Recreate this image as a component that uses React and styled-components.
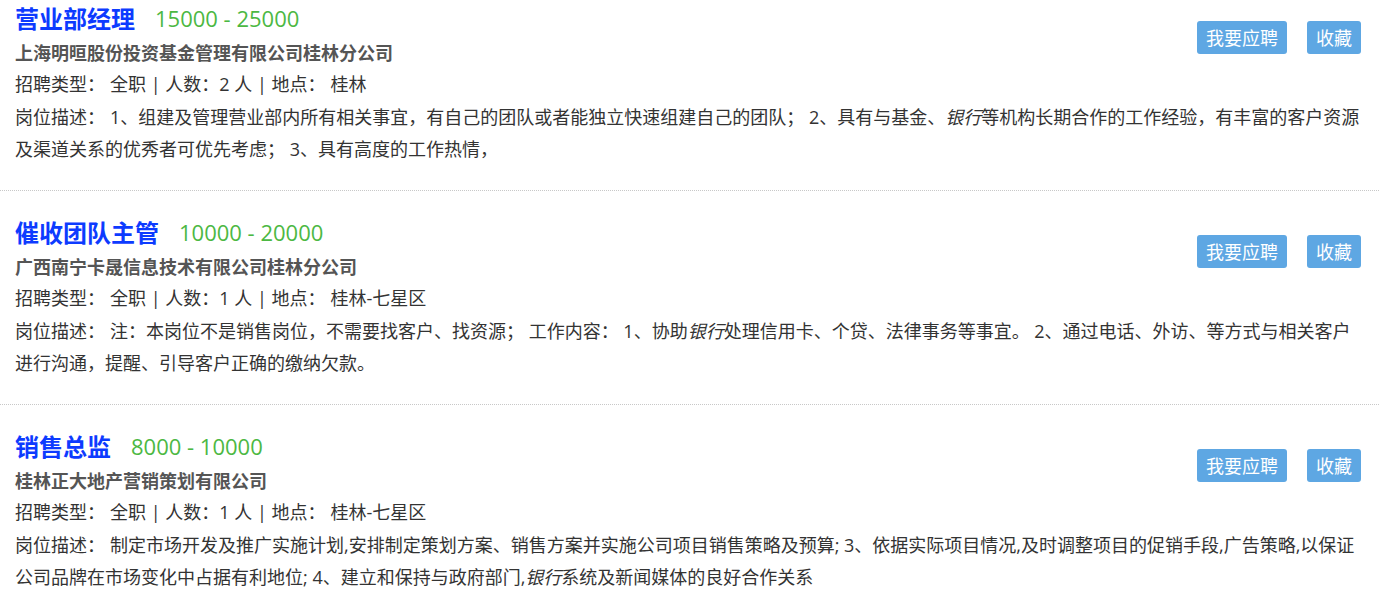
import React from 'react';
import styled, { createGlobalStyle } from 'styled-components';

const jobs = [
  {
    title: '营业部经理',
    salary: '15000 - 25000',
    company: '上海明晅股份投资基金管理有限公司桂林分公司',
    count: 2,
    place: '桂林',
    desc: [
      '1、组建及管理营业部内所有相关事宜，有自己的团队或者能独立快速组建自己的团队； 2、具有与基金、',
      <em key="e">银行</em>,
      '等机构长期合作的工作经验，有丰富的客户资源及渠道关系的优秀者可优先考虑； 3、具有高度的工作热情，',
    ],
  },
  {
    title: '催收团队主管',
    salary: '10000 - 20000',
    company: '广西南宁卡晟信息技术有限公司桂林分公司',
    count: 1,
    place: '桂林-七星区',
    desc: [
      '注：本岗位不是销售岗位，不需要找客户、找资源； 工作内容： 1、协助',
      <em key="e">银行</em>,
      '处理信用卡、个贷、法律事务等事宜。 2、通过电话、外访、等方式与相关客户进行沟通，提醒、引导客户正确的缴纳欠款。',
    ],
  },
  {
    title: '销售总监',
    salary: '8000 - 10000',
    company: '桂林正大地产营销策划有限公司',
    count: 1,
    place: '桂林-七星区',
    desc: [
      '制定市场开发及推广实施计划,安排制定策划方案、销售方案并实施公司项目销售策略及预算; 3、依据实际项目情况,及时调整项目的促销手段,广告策略,以保证公司品牌在市场变化中占据有利地位; 4、建立和保持与政府部门,',
      <em key="e">银行</em>,
      '系统及新闻媒体的良好合作关系',
    ],
  },
];

const App = () => {
  return (
    <>
      <GlobalStyle />
      <List>
        {jobs.map((job) => (
          <Item key={job.title}>
            <Header>
              <div>
                <TitleRow>
                  <Title>{job.title}</Title>
                  <Salary>{job.salary}</Salary>
                </TitleRow>
                <Company>{job.company}</Company>
                <Line>
                  <Label>招聘类型：</Label>全职 | 人数：{job.count} 人 | <Label>地点：</Label>
                  {job.place}
                </Line>
              </div>
              <Actions>
                <Button>我要应聘</Button>
                <Button>收藏</Button>
              </Actions>
            </Header>
            <Desc>
              <Label>岗位描述：</Label>
              {job.desc}
            </Desc>
          </Item>
        ))}
      </List>
    </>
  );
};

export default App;

const GlobalStyle = createGlobalStyle`
  body {
    margin: 0;
    background: #fff;
    font-family: "Open Sans", "Noto Sans CJK SC", sans-serif;
    color: #333;
  }
`;

const List = styled.div`
  display: flex;
  flex-direction: column;
`;

const Item = styled.div`
  padding: 23px 15px 25px 15px;
  border-top: 1px dotted #c8c8c8;

  &:first-child {
    padding-top: 0;
    border-top: none;
  }
`;

const Header = styled.div`
  display: grid;
  grid-template-columns: 1fr auto;
`;

const TitleRow = styled.div`
  display: flex;
  align-items: center;
  height: 35px;
`;

const Title = styled.h2`
  margin: 0;
  font-family: "Noto Sans CJK SC", sans-serif;
  font-size: 24px;
  font-weight: 700;
  color: #0d3bff;
`;

const Salary = styled.span`
  margin-left: 20px;
  font-size: 22px;
  color: #4cb843;
`;

const Company = styled.div`
  margin-top: 1px;
  font-family: "Noto Sans CJK SC", sans-serif;
  font-size: 18px;
  font-weight: 700;
  line-height: 32px;
  color: #555;
`;

const Line = styled.div`
  font-size: 18px;
  line-height: 32px;
`;

const Label = styled.span`
  margin-right: 5px;
`;

const Desc = styled.div`
  margin-top: 1px;
  font-size: 18px;
  line-height: 32px;

  em {
    font-style: italic;
  }
`;

const Actions = styled.div`
  display: flex;
  gap: 20px;
  align-items: flex-start;
  padding-top: 21px;
  margin-right: 3px;
`;

const Button = styled.button`
  height: 33px;
  padding: 0 9px;
  border: none;
  border-radius: 3px;
  background: #5ea7e3;
  color: #fff;
  font-family: "Noto Sans CJK SC", sans-serif;
  font-size: 18px;
  line-height: 33px;
  cursor: pointer;
`;
